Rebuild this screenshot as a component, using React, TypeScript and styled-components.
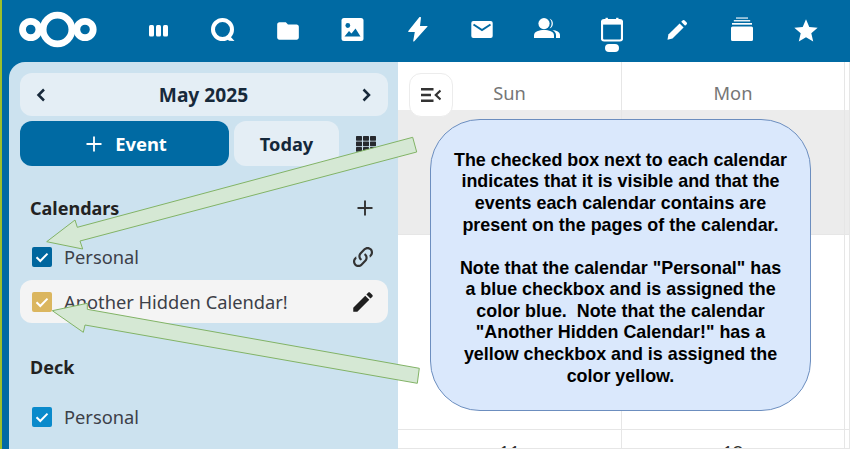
import React from 'react';
import styled, { createGlobalStyle } from 'styled-components';
import { MdFolder, MdStar } from 'react-icons/md';

const GlobalStyle = createGlobalStyle`
  html, body { margin: 0; padding: 0; height: 100%; overflow: hidden; }
  body { font-family: "Noto Sans", "Open Sans", sans-serif; background: #fff; }
`;

const Page = styled.div`
  position: relative;
  width: 850px;
  height: 449px;
  box-sizing: border-box;
  overflow: hidden;
  background: #006aa3;
  border-left: 2px solid #9cbf2b;
  display: flex;
  flex-direction: column;
`;

const TopBar = styled.header`
  height: 62px;
  flex: none;
  display: flex;
  align-items: flex-start;
  padding-left: 16px;
  color: #fff;
`;

const Logo = styled.svg`
  width: 80px;
  height: 38px;
  margin-top: 11px;
  margin-right: 28px;
  flex: none;
`;

const AppIcon = styled.div`
  position: relative;
  width: 64.8px;
  height: 62px;
  flex: none;
  display: flex;
  justify-content: center;
  padding-top: 17px;
  box-sizing: border-box;
  svg { display: block; }
`;

const ActiveDot = styled.span`
  position: absolute;
  left: 50%;
  top: 44px;
  width: 14px;
  height: 8px;
  margin-left: -7px;
  border-radius: 4px;
  background: #fff;
`;

const Body = styled.div`
  flex: 1;
  display: flex;
  min-height: 0;
  padding-left: 7px;
`;

const Sidebar = styled.aside`
  width: 389px;
  flex: none;
  box-sizing: border-box;
  background: #cce2ef;
  border-top-left-radius: 16px;
  padding: 11px 10px 0 11px;
  display: flex;
  flex-direction: column;
`;

const MonthNav = styled.div`
  height: 43px;
  flex: none;
  border-radius: 12px;
  background: #e4eef5;
  display: flex;
  align-items: center;
  justify-content: space-between;
  padding: 0 12px 0 11px;
  color: #17293a;
  font-weight: 700;
  font-size: 19.2px;
  svg { display: block; }
`;

const ActionRow = styled.div`
  display: flex;
  gap: 5px;
  margin-top: 5px;
  height: 45px;
  flex: none;
  align-items: stretch;
`;

const EventButton = styled.div`
  width: 209px;
  box-sizing: border-box;
  padding-left: 4px;
  border-radius: 12px;
  background: #006aa3;
  color: #fff;
  font-size: 18.4px;
  font-weight: 700;
  display: flex;
  align-items: center;
  justify-content: center;
  gap: 13px;
`;

const TodayButton = styled.div`
  width: 105px;
  border-radius: 12px;
  background: #e4eef5;
  color: #14283a;
  font-size: 18.2px;
  font-weight: 700;
  display: flex;
  align-items: center;
  justify-content: center;
`;

const ViewButton = styled.div`
  flex: 1;
  display: flex;
  align-items: center;
  justify-content: center;
  padding-right: 1px;
`;

const SectionHead = styled.div<{ $top: number }>`
  margin-top: ${p => p.$top}px;
  height: 24px;
  flex: none;
  display: flex;
  align-items: center;
  justify-content: space-between;
  padding: 0 14px 0 10px;
  font-size: 18px;
  font-weight: 700;
  color: #222;
`;

const CalRow = styled.div<{ $hover?: boolean; $top: number }>`
  margin-top: ${p => p.$top}px;
  height: 43px;
  flex: none;
  box-sizing: border-box;
  display: flex;
  align-items: center;
  padding: 0 12px 0 12px;
  border-radius: 12px;
  background: ${p => (p.$hover ? '#f4f4f4' : 'transparent')};
  font-size: 18.3px;
  color: #3c4048;
`;

const Check = styled.span<{ $color: string }>`
  width: 20px;
  height: 20px;
  flex: none;
  border-radius: 2px;
  background: ${p => p.$color};
  display: flex;
  align-items: center;
  justify-content: center;
  margin-right: 12px;
`;

const CalName = styled.span`
  flex: 1;
  white-space: nowrap;
`;

const Calendar = styled.main`
  position: relative;
  flex: 1;
  background: #fff;
  display: grid;
  grid-template-columns: 224px 223px 1fr;
  grid-template-rows: 48px 125px 195px 1fr;
`;

const Cell = styled.div<{ $shade?: boolean; $kind?: 'head' | 'date' }>`
  box-sizing: border-box;
  border-right: 1px solid #e6e6e6;
  border-bottom: 1px solid #e6e6e6;
  background: ${p => (p.$shade ? '#ececec' : '#fff')};
  text-align: center;
  color: ${p => (p.$kind === 'head' ? '#767676' : '#333')};
  font-size: 18.3px;
  line-height: ${p => (p.$kind === 'head' ? '62px' : '44px')};
  height: ${p => (p.$kind === 'head' ? '48px' : 'auto')};
  overflow: hidden;
  ${p => (p.$kind === 'head' ? 'border-bottom: none;' : '')}
`;

const ToggleButton = styled.div`
  position: absolute;
  left: 11px;
  top: 11px;
  width: 44px;
  height: 44px;
  box-sizing: border-box;
  border-radius: 12px;
  background: #fff;
  border: 1px solid #ececec;
  display: flex;
  align-items: center;
  justify-content: center;
`;

const Callout = styled.div`
  position: absolute;
  left: 428px;
  top: 119px;
  width: 381px;
  height: 292px;
  box-sizing: border-box;
  padding-top: 7px;
  background: #dae8fc;
  border: 1px solid #6c8ebf;
  border-radius: 50px;
  display: flex;
  align-items: center;
  justify-content: center;
  text-align: center;
  color: #000;
  font-family: "Liberation Sans", Arial, sans-serif;
  font-weight: 700;
  font-size: 17.9px;
  line-height: 21.6px;
  white-space: nowrap;
`;

const ArrowLayer = styled.svg`
  position: absolute;
  left: -2px;
  top: 0;
  width: 850px;
  height: 449px;
  pointer-events: none;
`;

const CheckMark = () => (
  <svg width="16" height="16" viewBox="0 0 16 16">
    <path d="M2.5 8.2 L6.3 12 L13.5 4.6" fill="none" stroke="#fff" strokeWidth="2" />
  </svg>
);

const Pencil = ({ size, color }: { size: number; color: string }) => (
  <svg width={size} height={size} viewBox="0 0 24 24" fill={color}>
    <path d="M20.71,7.04C21.1,6.65 21.1,6 20.71,5.63L18.37,3.29C18,2.9 17.35,2.9 16.96,3.29L15.12,5.12L18.87,8.87M3,17.25V21H6.75L17.81,9.93L14.06,6.18L3,17.25Z" />
  </svg>
);

const topIcons = [
  <svg width="19" height="24" viewBox="0 0 19 24" fill="#fff" key="dash">
    <rect x="0" y="8" width="5" height="11.5" rx="1.5" />
    <rect x="7" y="8" width="5" height="11.5" rx="1.5" />
    <rect x="14" y="8" width="5" height="11.5" rx="1.5" />
  </svg>,
  <svg width="24" height="25" viewBox="0 0 24 25" key="talk">
    <circle cx="11.5" cy="12.5" r="9.5" fill="none" stroke="#fff" strokeWidth="4" />
    <path d="M18 18 L23.5 24 L18 23.8 L15 21 Z" fill="#fff" />
  </svg>,
  <MdFolder size={26} color="#fff" style={{ marginTop: 1 }} key="files" />,
  <svg width="23" height="25" viewBox="0 0 23 25" key="photos">
    <rect x="0.5" y="1" width="22" height="23" rx="2.5" fill="#fff" />
    <circle cx="6.8" cy="8.5" r="2.4" fill="#006aa3" />
    <path d="M3.5 19.5 L8 14 L10.5 16.5 L14.5 11.5 L19.5 19.5 Z" fill="#006aa3" />
  </svg>,
  <svg width="20" height="25" viewBox="0 0 20 25" fill="#fff" key="activity">
    <path d="M11.5 0 L0.3 14 Q0 15 1 15 H6.8 L5.2 24 Q5.3 25 6.3 24.3 L19.5 9.6 Q20 9 19 9 H12 L13 0.6 Q12.5 -0.4 11.5 0 Z" />
  </svg>,
  <svg width="22" height="22" viewBox="0 0 22 22" key="mail">
    <rect x="0.3" y="4" width="21.4" height="17" rx="2" fill="#fff" />
    <path d="M2.5 7.5 L11 13 L19.5 7.5" fill="none" stroke="#006aa3" strokeWidth="2" />
  </svg>,
  <svg width="26" height="22" viewBox="0 0 26 22" fill="#fff" key="contacts">
    <circle cx="10" cy="6.6" r="5.6" />
    <path d="M0 21 V18.2 C0 14.6 5.2 13 10 13 S20 14.6 20 18.2 V21 Z" />
    <path d="M15.6 1.4 A5.6 5.6 0 0 1 15.6 11.6 A7.5 7.5 0 0 0 15.6 1.4 Z" />
    <path d="M18.4 13 C22.5 13.4 26 15 26 18 V21 H22 V18 C22 16 20.6 14.2 18.4 13 Z" />
  </svg>,
  <svg width="22" height="25" viewBox="0 0 22 25" key="calendar">
    <path d="M3 3 H19 A2 2 0 0 1 21 5 V21.5 A2 2 0 0 1 19 23.5 H3 A2 2 0 0 1 1 21.5 V5 A2 2 0 0 1 3 3 Z" fill="none" stroke="#fff" strokeWidth="2.2" />
    <rect x="1" y="3" width="20" height="4.6" fill="#fff" />
    <rect x="4.5" y="0.8" width="2.4" height="4" fill="#fff" />
    <rect x="15.1" y="0.8" width="2.4" height="4" fill="#fff" />
  </svg>,
  <svg width="20" height="25" viewBox="0 0 20 25" fill="#fff" key="notes">
    <path d="M0.5 22.8 L1.4 17.5 L12.6 6.4 L16.6 10.4 L5.5 21.6 Z" />
    <path d="M14.2 4.8 L15.8 3.2 Q16.6 2.6 17.4 3.2 L19.7 5.6 Q20.3 6.4 19.7 7.2 L18.1 8.8 Z" />
  </svg>,
  <svg width="24" height="25" viewBox="0 0 24 25" key="deck">
    <rect x="6" y="0.4" width="12" height="1.3" fill="#fff" opacity="0.85" />
    <rect x="3.8" y="3" width="16.4" height="1.5" fill="#fff" opacity="0.9" />
    <rect x="2" y="6" width="20" height="1.7" fill="#fff" />
    <path d="M2.5 9.5 H21.5 A1.5 1.5 0 0 1 23 11 V22.5 A1.5 1.5 0 0 1 21.5 24 H2.5 A1.5 1.5 0 0 1 1 22.5 V11 A1.5 1.5 0 0 1 2.5 9.5 Z" fill="#fff" />
  </svg>,
  <MdStar size={28} color="#fff" key="star" />,
];

export default function App() {
  return (
    <Page>
      <GlobalStyle />
      <TopBar>
        <Logo viewBox="0 0 80 38">
          <g fill="none" stroke="#fff" strokeWidth="6.8">
            <circle cx="12.7" cy="18.5" r="8.2" />
            <circle cx="39.5" cy="18.5" r="14.4" />
            <circle cx="67" cy="18.5" r="8.2" />
          </g>
        </Logo>
        {topIcons.map((icon, i) => (
          <AppIcon key={i}>
            {icon}
            {i === 7 && <ActiveDot />}
          </AppIcon>
        ))}
      </TopBar>
      <Body>
        <Sidebar>
          <MonthNav>
            <svg width="20" height="20" viewBox="0 0 20 20">
              <path d="M13 4.5 L7.5 10 L13 15.5" fill="none" stroke="#17293a" strokeWidth="2.5" />
            </svg>
            <span>May 2025</span>
            <svg width="20" height="20" viewBox="0 0 20 20">
              <path d="M7.5 4.5 L13 10 L7.5 15.5" fill="none" stroke="#17293a" strokeWidth="2.5" />
            </svg>
          </MonthNav>
          <ActionRow>
            <EventButton>
              <svg width="16" height="16" viewBox="0 0 16 16">
                <path d="M8 0.5 V15.5 M0.5 8 H15.5" stroke="#fff" strokeWidth="1.8" />
              </svg>
              <span>Event</span>
            </EventButton>
            <TodayButton>Today</TodayButton>
            <ViewButton>
              <svg width="20" height="16" viewBox="0 0 20 16" fill="#26292e">
                {[0, 7, 14].map(x =>
                  [0, 5.5, 11].map(y => <rect key={`${x}-${y}`} x={x} y={y} width="6" height="4.7" rx="0.6" />)
                )}
              </svg>
            </ViewButton>
          </ActionRow>
          <SectionHead $top={30}>
            <span>Calendars</span>
            <svg width="18" height="18" viewBox="0 0 18 18">
              <path d="M9 1.5 V16.5 M1.5 9 H16.5" stroke="#333" strokeWidth="1.9" />
            </svg>
          </SectionHead>
          <CalRow $top={15}>
            <Check $color="#00669e"><CheckMark /></Check>
            <CalName>Personal</CalName>
            <svg width="26" height="26" viewBox="0 0 24 24" fill="#333">
              <path d="M10.59,13.41C11,13.8 11,14.44 10.59,14.83C10.2,15.22 9.56,15.22 9.17,14.83C7.22,12.88 7.22,9.71 9.17,7.76V7.76L12.71,4.22C14.66,2.27 17.83,2.27 19.78,4.22C21.73,6.17 21.73,9.34 19.78,11.29L18.29,12.78C18.3,11.96 18.17,11.14 17.89,10.36L18.36,9.88C19.54,8.71 19.54,6.81 18.36,5.64C17.19,4.46 15.29,4.46 14.12,5.64L10.59,9.17C9.41,10.34 9.41,12.24 10.59,13.41M13.41,9.17C13.8,8.78 14.44,8.78 14.83,9.17C16.78,11.12 16.78,14.29 14.83,16.24V16.24L11.29,19.78C9.34,21.73 6.17,21.73 4.22,19.78C2.27,17.83 2.27,14.66 4.22,12.71L5.71,11.22C5.7,12.04 5.83,12.86 6.11,13.65L5.64,14.12C4.46,15.29 4.46,17.19 5.64,18.36C6.81,19.54 8.71,19.54 9.88,18.36L13.41,14.83C14.59,13.66 14.59,11.76 13.41,10.59C13,10.2 13,9.56 13.41,9.17Z" />
            </svg>
          </CalRow>
          <CalRow $top={2} $hover>
            <Check $color="#dbb65f"><CheckMark /></Check>
            <CalName>Another Hidden Calendar!</CalName>
            <Pencil size={26} color="#1f1f1f" />
          </CalRow>
          <SectionHead $top={32}>
            <span>Deck</span>
          </SectionHead>
          <CalRow $top={16}>
            <Check $color="#0a8acb"><CheckMark /></Check>
            <CalName>Personal</CalName>
          </CalRow>
        </Sidebar>
        <Calendar>
          <Cell $kind="head">Sun</Cell>
          <Cell $kind="head">Mon</Cell>
          <Cell $kind="head" />
          <Cell $shade />
          <Cell $shade />
          <Cell $shade />
          <Cell />
          <Cell />
          <Cell />
          <Cell $kind="date">11</Cell>
          <Cell $kind="date">12</Cell>
          <Cell />
          <ToggleButton>
            <svg width="20" height="14" viewBox="0 0 20 14">
              <path d="M0 1.2 H12.5 M0 7 H10 M0 12.8 H12.5" stroke="#333" strokeWidth="2.4" />
              <path d="M19.5 2.5 L14.8 7 L19.5 11.5" fill="none" stroke="#333" strokeWidth="2.2" />
            </svg>
          </ToggleButton>
        </Calendar>
      </Body>
      <Callout>
        <div>
          The checked box next to each calendar<br />
          indicates that it is visible and that the<br />
          events each calendar contains are<br />
          present on the pages of the calendar.<br />
          <br />
          Note that the calendar "Personal" has<br />
          a blue checkbox and is assigned the<br />
          color blue.&nbsp; Note that the calendar<br />
          "Another Hidden Calendar!" has a<br />
          yellow checkbox and is assigned the<br />
          color yellow.
        </div>
      </Callout>
      <ArrowLayer viewBox="0 0 850 449">
        <polygon
          points="46.7,241.7 75,220 77.3,227.3 412.7,137.3 416.7,152 80,241 82.7,249"
          fill="#d5e8d4"
          stroke="#82b366"
        />
        <polygon
          points="52.3,310.7 87.3,303.3 87.3,309.3 419.3,368.3 417.3,383.3 85,325 83.3,332.3"
          fill="#d5e8d4"
          stroke="#82b366"
        />
      </ArrowLayer>
    </Page>
  );
}
